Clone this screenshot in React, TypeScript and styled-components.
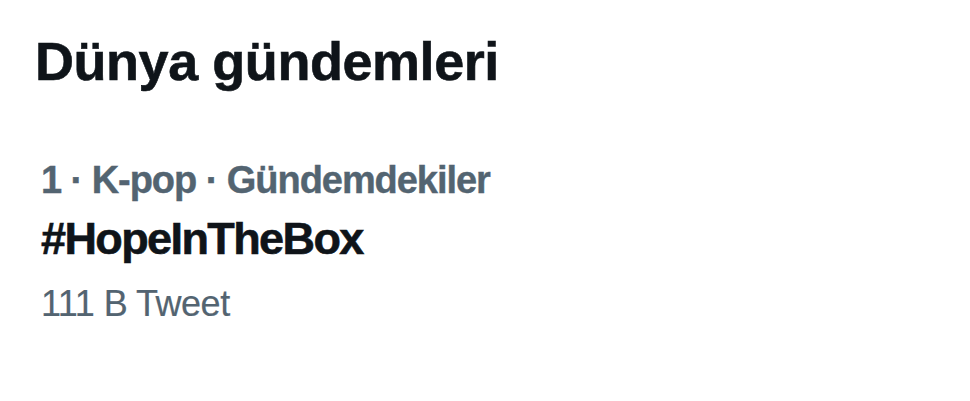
import React from "react";
import styled, { createGlobalStyle } from "styled-components";

const Global = createGlobalStyle`
  html, body { margin: 0; padding: 0; background: #ffffff; }
  body { font-family: "Liberation Sans", Arial, sans-serif; }
`;

const Panel = styled.section`
  width: 970px;
  height: 401px;
  background: #ffffff;
  display: flex;
  flex-direction: column;
  box-sizing: border-box;
  padding-top: 29px;
`;

const Title = styled.h2`
  margin: 0;
  padding-left: 35px;
  font-size: 54px;
  line-height: 64px;
  font-weight: 700;
  letter-spacing: -0.45px;
  color: #0f1419;
  -webkit-text-stroke: 0.6px #0f1419;
`;

const Trend = styled.div`
  display: flex;
  flex-direction: column;
  padding-left: 41px;
  margin-top: 64px;
`;

const Meta = styled.div`
  font-size: 38px;
  line-height: 46px;
  font-weight: 700;
  letter-spacing: -1.05px;
  color: #536471;
  -webkit-text-stroke: 0.4px #536471;
`;

const Tag = styled.div`
  margin-top: 8px;
  font-size: 45px;
  line-height: 56px;
  font-weight: 700;
  letter-spacing: -1.6px;
  color: #0f1419;
  -webkit-text-stroke: 0.6px #0f1419;
`;

const Count = styled.div`
  margin-top: 15px;
  font-size: 36px;
  line-height: 44px;
  font-weight: 400;
  letter-spacing: -0.5px;
  color: #536471;
  -webkit-text-stroke: 0.2px #536471;
`;

export default function App() {
  return (
    <>
      <Global />
      <Panel>
        <Title>Dünya gündemleri</Title>
        <Trend>
          <Meta>1 · K-pop · Gündemdekiler</Meta>
          <Tag>#HopeInTheBox</Tag>
          <Count>111 B Tweet</Count>
        </Trend>
      </Panel>
    </>
  );
}
